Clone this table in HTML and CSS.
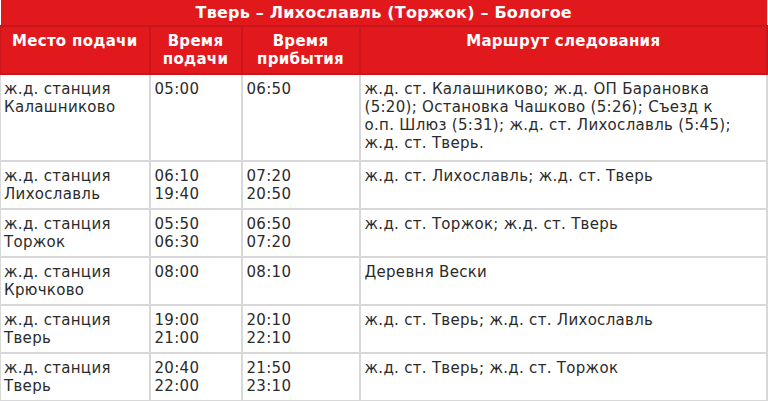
FILE: index.html
```html
<!DOCTYPE html>
<html lang="ru">
<head>
<meta charset="utf-8">
<title>Расписание</title>
<link rel="stylesheet" href="styles.css">
</head>
<body>
<table class="schedule">
  <colgroup>
    <col class="c1"><col class="c2"><col class="c3"><col class="c4">
  </colgroup>
  <thead>
    <tr class="title-row"><th colspan="4">Тверь – Лихославль (Торжок) – Бологое</th></tr>
    <tr class="head-row">
      <th>Место подачи</th>
      <th>Время подачи</th>
      <th>Время прибытия</th>
      <th>Маршрут следования</th>
    </tr>
  </thead>
  <tbody>
    <tr class="long-row">
      <td>ж.д. станция Калашниково</td>
      <td>05:00</td>
      <td>06:50</td>
      <td>ж.д. ст. Калашниково; ж.д. ОП Барановка (5:20); Остановка Чашково (5:26); Съезд к о.п. Шлюз (5:31); ж.д. ст. Лихославль (5:45); ж.д. ст. Тверь.</td>
    </tr>
    <tr>
      <td>ж.д. станция Лихославль</td>
      <td>06:10<br>19:40</td>
      <td>07:20<br>20:50</td>
      <td>ж.д. ст. Лихославль; ж.д. ст. Тверь</td>
    </tr>
    <tr>
      <td>ж.д. станция Торжок</td>
      <td>05:50<br>06:30</td>
      <td>06:50<br>07:20</td>
      <td>ж.д. ст. Торжок; ж.д. ст. Тверь</td>
    </tr>
    <tr>
      <td>ж.д. станция Крючково</td>
      <td>08:00</td>
      <td>08:10</td>
      <td>Деревня Вески</td>
    </tr>
    <tr>
      <td>ж.д. станция Тверь</td>
      <td>19:00<br>21:00</td>
      <td>20:10<br>22:10</td>
      <td>ж.д. ст. Тверь; ж.д. ст. Лихославль</td>
    </tr>
    <tr>
      <td>ж.д. станция Тверь</td>
      <td>20:40<br>22:00</td>
      <td>21:50<br>23:10</td>
      <td>ж.д. ст. Тверь; ж.д. ст. Торжок</td>
    </tr>
  </tbody>
</table>
</body>
</html>
```
FILE: styles.css
```css
html, body {
  margin: 0;
  padding: 0;
  background: #ffffff;
}
body {
  font-family: "DejaVu Sans", Verdana, sans-serif;
  font-size: 15px;
  line-height: 18px;
  color: #2b2b2b;
}
.schedule {
  width: 768px;
  border-collapse: collapse;
  table-layout: fixed;
}
.c1 { width: 149px; }
.c2 { width: 92px; }
.c3 { width: 118px; }
.c4 { width: auto; }

.schedule th {
  background: #e1191d;
  color: #ffffff;
  font-weight: bold;
  font-size: 15px;
  letter-spacing: 0.3px;
  text-align: center;
  vertical-align: top;
  padding: 5px 3px 5px 3px;
  border: 2px solid #c9161a;
}
.title-row th {
  font-size: 16px;
  letter-spacing: 0.2px;
  padding: 4px 4px 3px 4px;
  border-top: 0;
  border-left: 0;
  border-right: 0;
}
.schedule td {
  vertical-align: top;
  text-align: left;
  letter-spacing: 0.3px;
  padding: 5px 4px 5px 4px;
  border: 2px solid #d8d8d8;
}
.schedule tr td:first-child {
  border-left-width: 1px;
  padding-left: 3px;
}
.schedule tr td:last-child {
  padding-right: 26px;
}
.schedule .long-row td {
  padding-bottom: 8px;
}
.head-row th:first-child { border-left-width: 1px; }
```
